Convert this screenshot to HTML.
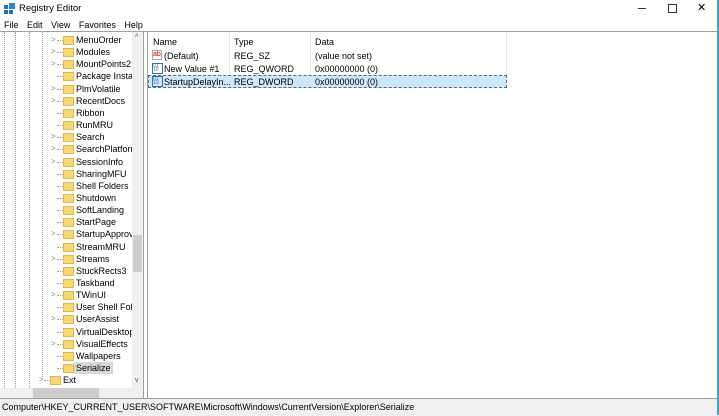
<!DOCTYPE html><html><head><style>
body{margin:0;width:719px;height:415px;overflow:hidden;background:#fff;font-family:"Liberation Sans",sans-serif;font-size:9px;color:#000;position:relative}
.a{position:absolute}
.vl{position:absolute;top:32px;height:366px;border-left:1px dotted #a0a0a0}
.row{position:absolute;height:12px;line-height:12px;white-space:nowrap}
.fold{position:absolute;width:11px;height:9px;background:#f8d775;border:1px solid #e0b850;box-sizing:border-box}
.arr{position:absolute;color:#888;font-size:8px}
.h{position:absolute;border-top:1px dotted #a0a0a0;width:6px}
</style></head><body>
<div class="a" style="left:4px;top:3px;width:12px;height:11px">
<svg width="12" height="11"><rect x="0" y="2" width="4" height="4" fill="#1e6fc8"/><rect x="5" y="0" width="6" height="6" fill="#2a82da"/><rect x="0" y="7" width="4" height="4" fill="#1e6fc8"/><rect x="5" y="7" width="4" height="4" fill="#1e6fc8"/></svg></div>
<div class="a" style="left:19px;top:3px;font-size:9.5px">Registry Editor</div>
<div class="a" style="left:638px;top:8px;width:8px;border-top:1px solid #333"></div>
<div class="a" style="left:668px;top:4px;width:7px;height:7px;border:1px solid #333"></div>
<div class="a" style="left:697px;top:1px;font-size:11px">✕</div>
<div class="a" style="left:4px;top:20px;word-spacing:6px">File Edit View Favorites Help</div>
<div class="a" style="left:0;top:31px;width:717px;border-top:1px solid #a0a0a0"></div>
<div class="a" style="left:717px;top:0;width:2px;height:415px;background:#4aa3b5"></div>
<div class="a" style="left:0;top:32px;width:132px;height:356px;overflow:hidden">
<div class="vl" style="left:4px;top:0"></div><div class="vl" style="left:15px;top:0"></div><div class="vl" style="left:29px;top:0"></div><div class="vl" style="left:42px;top:0;height:345px"></div>
<div id="tree" style="position:absolute;left:0;top:-32px"></div>
</div>
<div class="a" style="left:132px;top:32px;width:11px;height:366px;background:#f0f0f0"></div>
<div class="a" style="left:133px;top:235px;width:9px;height:37px;background:#cdcdcd"></div>
<div class="a" style="left:135px;top:34px;font-size:7px;color:#555">^</div>
<div class="a" style="left:135px;top:377px;font-size:7px;color:#555">v</div>
<div class="a" style="left:0;top:388px;width:132px;height:10px;background:#f0f0f0"></div>
<div class="a" style="left:33px;top:388px;width:66px;height:10px;background:#cdcdcd"></div>
<div class="a" style="left:143px;top:32px;width:1px;height:366px;background:#a0a0a0"></div>
<div class="a" style="left:147px;top:32px;width:1px;height:366px;background:#a0a0a0"></div>
<div class="a" style="left:153px;top:37px">Name</div><div class="a" style="left:234px;top:37px">Type</div><div class="a" style="left:315px;top:37px">Data</div>
<div class="a" style="left:229px;top:33px;height:54px;border-left:1px solid #e5e5e5"></div>
<div class="a" style="left:310px;top:33px;height:54px;border-left:1px solid #e5e5e5"></div>
<div class="a" style="left:506px;top:33px;height:54px;border-left:1px solid #e5e5e5"></div>
<div class="a" style="left:148px;top:75px;width:357px;height:11px;background:#cce8ff;border:1px dashed #666"></div>
<div class="a" style="left:152px;top:50px;color:#c00;font-size:7px;border:1px solid #aaa;line-height:8px">ab</div>
<div class="a" style="left:152px;top:63px;width:9px;height:9px;border:1px solid #3a6fb0;font-size:5px;color:#3a6fb0;line-height:4px">01<br>10</div>
<div class="a" style="left:152px;top:76px;width:9px;height:9px;border:1px solid #3a6fb0;font-size:5px;color:#3a6fb0;line-height:4px">01<br>10</div>
<div class="a" style="left:164px;top:51px">(Default)</div><div class="a" style="left:234px;top:51px">REG_SZ</div><div class="a" style="left:315px;top:51px">(value not set)</div>
<div class="a" style="left:164px;top:64px">New Value #1</div><div class="a" style="left:234px;top:64px">REG_QWORD</div><div class="a" style="left:315px;top:64px">0x00000000 (0)</div>
<div class="a" style="left:164px;top:77px">StartupDelayIn...</div><div class="a" style="left:234px;top:77px">REG_DWORD</div><div class="a" style="left:315px;top:77px">0x00000000 (0)</div>
<div class="a" style="left:0;top:398px;width:717px;height:17px;background:#f0f0f0;border-top:1px solid #a0a0a0"></div>
<div class="a" style="left:2px;top:402px">Computer\HKEY_CURRENT_USER\SOFTWARE\Microsoft\Windows\CurrentVersion\Explorer\Serialize</div>
<script>
var items=["MenuOrder","Modules","MountPoints2","Package Installa","PlmVolatile","RecentDocs","Ribbon","RunMRU","Search","SearchPlatform","SessionInfo","SharingMFU","Shell Folders","Shutdown","SoftLanding","StartPage","StartupApprove","StreamMRU","Streams","StuckRects3","Taskband","TWinUI","User Shell Folde","UserAssist","VirtualDesktops","VisualEffects","Wallpapers","Serialize"];
var ar=[0,1,2,4,5,8,9,10,16,18,21,23,25];var h="";
items.forEach(function(n,i){var y=34+i*12.15;
if(ar.indexOf(i)>=0)h+='<div class="arr" style="left:51px;top:'+(y+1)+'px">&gt;</div>';
h+='<div class="h" style="left:57px;top:'+(y+6)+'px"></div><div class="fold" style="left:63px;top:'+(y+2)+'px"></div>';
h+='<div class="row" style="left:'+(i==27?74:76)+'px;top:'+y+'px;'+(i==27?'background:#d9d9d9;padding:0 2px;':'')+'">'+n+'</div>';});
var y=374;h+='<div class="arr" style="left:39px;top:'+(y+1)+'px">&gt;</div><div class="h" style="left:44px;top:'+(y+6)+'px"></div><div class="fold" style="left:50px;top:'+(y+2)+'px"></div><div class="row" style="left:63px;top:'+y+'px">Ext</div>';
document.getElementById("tree").innerHTML=h;
</script>
</body></html>
